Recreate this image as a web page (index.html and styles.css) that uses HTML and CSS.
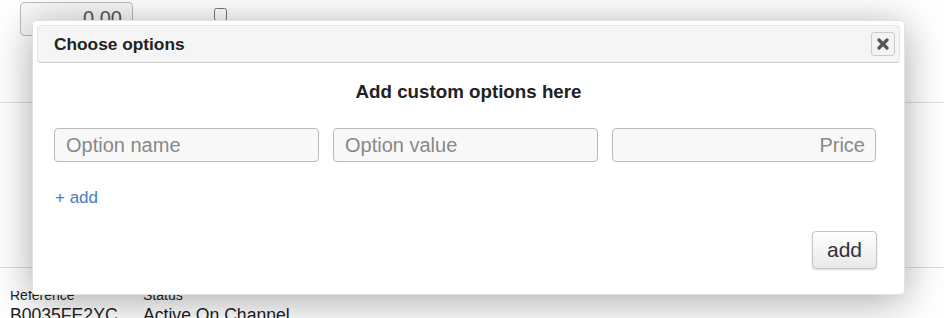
FILE: index.html
```html
<!DOCTYPE html>
<html lang="en">
<head>
    <meta charset="UTF-8">
    <title>Choose options</title>
    <link rel="stylesheet" href="styles.css">
</head>
<body>
    <div class="page">
        <div class="top-row">
            <input class="price-input" type="text" value="0.00">
            <input class="check" type="checkbox">
        </div>
        <div class="divider first"></div>
        <div class="spacer"></div>
        <div class="divider"></div>
        <div class="info-row">
            <div class="info-col ref">
                <div class="label-clip"><span class="label">Reference</span></div>
                <span class="value">B0035FE2YC</span>
            </div>
            <div class="info-col">
                <div class="label-clip"><span class="label">Status</span></div>
                <span class="value">Active On Channel</span>
            </div>
        </div>
    </div>

    <div class="dialog">
        <div class="dialog-titlebar">
            <span class="dialog-title">Choose options</span>
            <button class="dialog-close" title="Close">
                <svg width="12" height="12" viewBox="0 0 12 12">
                    <path d="M2 2 L10 10 M10 2 L2 10" stroke="#555" stroke-width="3.2" stroke-linecap="round"/>
                </svg>
            </button>
        </div>
        <div class="dialog-content">
            <h3>Add custom options here</h3>
            <div class="option-row">
                <input type="text" placeholder="Option name">
                <input type="text" placeholder="Option value">
                <input type="text" class="right" placeholder="Price">
            </div>
            <a href="#" class="add-link">+ add</a>
            <div class="dialog-buttons">
                <button class="btn">add</button>
            </div>
        </div>
    </div>
</body>
</html>
```

FILE: styles.css
```css
body { margin: 0; background: #fff; font-family: "Liberation Sans", Arial, sans-serif; color: #333; overflow: hidden; }
.page { width: 944px; height: 318px; overflow: hidden; }
.top-row { display: flex; align-items: center; height: 36px; padding-left: 20px; }
.price-input { width: 113px; height: 34px; box-sizing: border-box; border: 1px solid #bbb; border-radius: 4px; background: #f8f8f8; font-family: inherit; font-size: 20px; color: #555; text-align: right; padding: 0 10px; margin-top: 1px; }
.check { width: 13px; height: 13px; margin: 0 0 8px 81px; }
.divider { height: 1px; background: #ddd; }
.divider.first { margin-top: 66px; }
.spacer { height: 164px; }
.info-row { display: flex; padding: 23px 0 0 10px; }
.info-col { display: flex; flex-direction: column; }
.info-col.ref { width: 133px; }
.label-clip { height: 11px; overflow: hidden; }
.label { display: block; margin-top: -3px; font-size: 14px; line-height: 14px; color: #222; }
.value { margin-top: 4px; font-size: 17.6px; line-height: 18px; color: #222; white-space: nowrap; }

.dialog { position: absolute; left: 32px; top: 20px; width: 873px; height: 275px; box-sizing: border-box; padding: 4px; background: #fff; border: 1px solid #e2e2e2; border-radius: 4px; box-shadow: 0 6px 40px rgba(0,0,0,0.35); }
.dialog-titlebar { display: flex; align-items: center; justify-content: space-between; height: 38px; box-sizing: border-box; padding: 0 4px 0 16px; background: #f5f5f5; border: 1px solid #e6e6e6; border-bottom-color: #ccc; border-radius: 4px; }
.dialog-title { font-size: 17.3px; font-weight: bold; color: #222; }
.dialog-close { width: 24px; height: 24px; padding: 0; display: flex; align-items: center; justify-content: center; background: #f3f3f3; border: 1px solid #ccc; border-radius: 3px; }
.dialog-content { padding: 0 17px; }
.dialog-content h3 { margin: 18px 0 0; text-align: center; font-size: 18.75px; line-height: 22px; color: #222; }
.option-row { display: flex; gap: 14px; margin: 25px 7px 0 0; }
.option-row input { flex: 1; min-width: 0; height: 34px; box-sizing: border-box; border: 1px solid #bbb; border-radius: 4px; background: #f8f8f8; font-family: inherit; font-size: 20px; padding: 0 11px; color: #555; }
.option-row input::placeholder { color: #888; }
.option-row input.right { text-align: right; padding-right: 10px; }
.add-link { display: inline-block; margin-top: 26px; margin-left: 1px; font-size: 17px; color: #4a7bc0; text-decoration: none; }
.dialog-buttons { display: flex; justify-content: flex-end; margin: 23px 6px 0 0; }
.btn { width: 65px; height: 38px; font-family: inherit; font-size: 21px; color: #333; border: 1px solid #c4c4c4; border-radius: 4px; background: linear-gradient(#fff, #e8e8e8); box-shadow: 0 1px 2px rgba(0,0,0,0.15); padding: 0; }
```
